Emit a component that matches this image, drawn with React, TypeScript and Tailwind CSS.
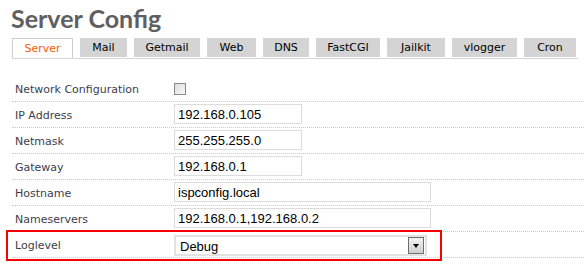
import React from "react";

const tabs = [
  { name: "Server", w: "w-[61px]" },
  { name: "Mail", w: "w-[47px]" },
  { name: "Getmail", w: "w-[66px]" },
  { name: "Web", w: "w-[49px]" },
  { name: "DNS", w: "w-[46px]" },
  { name: "FastCGI", w: "w-[64px]" },
  { name: "Jailkit", w: "w-[58px]" },
  { name: "vlogger", w: "w-[65px]" },
  { name: "Cron", w: "w-[52px]" },
];

type Field = { label: string; value?: string; width?: string; kind?: "check" | "select" };

const fields: Field[] = [
  { label: "Network Configuration", kind: "check" },
  { label: "IP Address", value: "192.168.0.105", width: "w-[128px]" },
  { label: "Netmask", value: "255.255.255.0", width: "w-[128px]" },
  { label: "Gateway", value: "192.168.0.1", width: "w-[128px]" },
  { label: "Hostname", value: "ispconfig.local", width: "w-[257px]" },
  { label: "Nameservers", value: "192.168.0.1,192.168.0.2", width: "w-[257px]" },
  { label: "Loglevel", value: "Debug", kind: "select" },
];

const labelFont = { fontFamily: '"DejaVu Sans", Verdana, sans-serif' };

const Row = ({ field }: { field: Field }) => {
  return (
    <div className="relative flex h-[26px] border-b border-dotted border-[#c8c8c8]">
      <div className="w-[162px] pl-[3px] pt-[6px] text-[11px] text-[#3d3d4d]" style={labelFont}>
        {field.label}
      </div>
      {field.kind === "check" && (
        <div className="pt-[7px]">
          <span className="block h-[12px] w-[12px] border border-[#8a8a8a] bg-gradient-to-br from-[#dcdcdc] to-[#f8f8f8]" />
        </div>
      )}
      {field.kind === "select" && (
        <div className="pt-[3px]">
          <div className="flex h-[21px] w-[253px] items-center justify-between border-2 border-[#e2e2e2] bg-white pl-[4px] pr-[1px] font-['Liberation_Sans',Arial,sans-serif] text-[13px] text-black">
            <span className="pt-[2px]">{field.value}</span>
            <span className="flex h-[17px] w-[16px] items-center justify-center border border-[#6e6e6e] bg-gradient-to-b from-[#f4f4f4] to-[#cfcfcf]">
              <span className="h-0 w-0 border-x-[3.5px] border-t-[4px] border-x-transparent border-t-black" />
            </span>
          </div>
        </div>
      )}
      {field.value && field.kind !== "select" && (
        <div className="pt-[2px]">
          <div
            className={`${field.width} h-[20px] border border-[#dcdcdc] bg-white pl-[3px] pt-[1px] font-['Liberation_Sans',Arial,sans-serif] text-[13px] leading-[17px] text-black`}
          >
            {field.value}
          </div>
        </div>
      )}
      {field.kind === "select" && (
        <span className="pointer-events-none absolute left-[-6px] top-[-2px] h-[31px] w-[436px] border-2 border-[#f50000]" />
      )}
    </div>
  );
};

const App = () => {
  return (
    <div className="h-[276px] w-[584px] overflow-hidden bg-white">
      <h1 className="pl-[11px] pt-[3px] font-['Lato',sans-serif] text-[25px] font-bold leading-[30px] text-[#5f5f5f]">
        Server Config
      </h1>
      <div className="ml-[12px] mr-[6px] mt-[5px] flex gap-[7px] border-b border-[#d6d6d6]" style={labelFont}>
        {tabs.map((tab, i) => (
          <div
            key={tab.name}
            className={
              i === 0
                ? `${tab.w} h-[20px] border border-[#cfcfcf] border-b-0 bg-white pt-[3px] text-center text-[11px] leading-[14px] text-[#ff5a00]`
                : `${tab.w} h-[19px] bg-[#d4d4d4] pt-[3px] text-center text-[11px] leading-[14px] text-black`
            }
          >
            {tab.name}
          </div>
        ))}
      </div>
      <div className="ml-[12px] mt-[17px]">
        {fields.map((f) => (
          <Row key={f.label} field={f} />
        ))}
      </div>
    </div>
  );
};

export default App;
